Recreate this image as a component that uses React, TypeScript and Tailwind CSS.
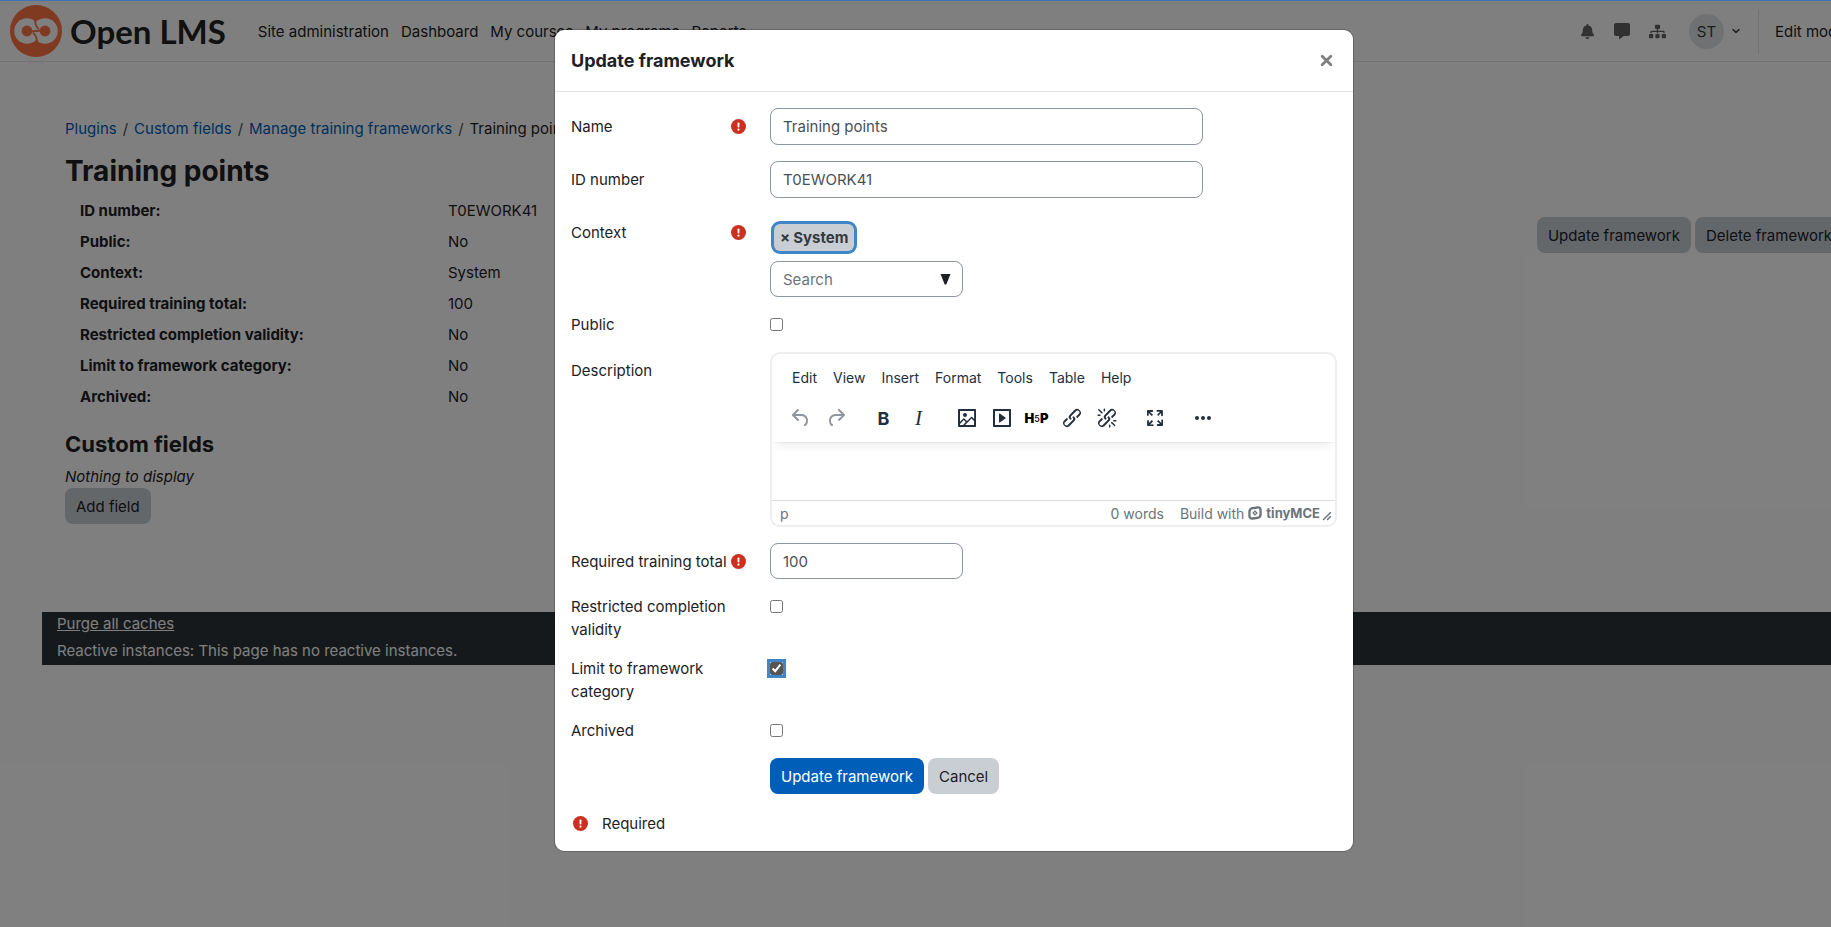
import type { ReactNode } from 'react';
import { FaBell, FaSitemap } from 'react-icons/fa';
import { FaMessage } from 'react-icons/fa6';
import { ChevronDown } from 'lucide-react';

const navLinks = ['Site administration', 'Dashboard', 'My courses', 'My programs', 'Reports'];
const crumbs = ['Plugins', 'Custom fields', 'Manage training frameworks'];

const details = [
    { label: 'ID number:', value: 'T0EWORK41' },
    { label: 'Public:', value: 'No' },
    { label: 'Context:', value: 'System' },
    { label: 'Required training total:', value: '100' },
    { label: 'Restricted completion validity:', value: 'No' },
    { label: 'Limit to framework category:', value: 'No' },
    { label: 'Archived:', value: 'No' },
];

const editorMenus = ['Edit', 'View', 'Insert', 'Format', 'Tools', 'Table', 'Help'];

const linkPath =
    'M6.2 12.3a1 1 0 0 1 1.4 1.4l-2 2a2 2 0 1 0 2.6 2.8l4.8-4.8a1 1 0 0 0 0-1.4 1 1 0 1 1 1.4-1.3 2.9 2.9 0 0 1 0 4L9.6 20a3.9 3.9 0 0 1-5.5-5.5l2-2Zm11.6-.6a1 1 0 0 1-1.4-1.4l2-2a2 2 0 1 0-2.6-2.8L11 10.3a1 1 0 0 0 0 1.4A1 1 0 1 1 9.6 13a2.9 2.9 0 0 1 0-4L14.4 4a3.9 3.9 0 0 1 5.5 5.5l-2 2Z';

const icons = {
    undo: 'M6.4 8H12c3.7 0 6.2 2 6.8 5.1.6 2.7-.4 5.6-2.3 6.8a1 1 0 0 1-1-1.8c1.1-.6 1.8-2.7 1.4-4.6-.5-2.1-2.1-3.5-4.9-3.5H6.4l3.3 3.3a1 1 0 1 1-1.4 1.4l-5-5a1 1 0 0 1 0-1.4l5-5a1 1 0 0 1 1.4 1.4L6.4 8Z',
    redo: 'M17.6 10H12c-2.8 0-4.4 1.4-4.9 3.5-.4 2 .3 4 1.4 4.6a1 1 0 1 1-1 1.8c-2-1.2-2.9-4.1-2.3-6.8.6-3 3-5.1 6.8-5.1h5.6l-3.3-3.3a1 1 0 1 1 1.4-1.4l5 5a1 1 0 0 1 0 1.4l-5 5a1 1 0 0 1-1.4-1.4l3.3-3.3Z',
    image: 'm5 15.7 3.3-3.2c.3-.3.7-.3 1 0L12 15l4.1-4c.3-.4.8-.4 1 0l2 1.9V5H5v10.7ZM5 18V19h3l2.8-2.9-2-2L5 17.9Zm14-3-2.5-2.4-6.4 6.5H19v-4ZM4 3h16c.6 0 1 .4 1 1v16c0 .6-.4 1-1 1H4a1 1 0 0 1-1-1V4c0-.6.4-1 1-1Zm6 8a2 2 0 1 0 0-4 2 2 0 0 0 0 4Z',
    media: 'M4 3h16c.6 0 1 .4 1 1v16c0 .6-.4 1-1 1H4a1 1 0 0 1-1-1V4c0-.6.4-1 1-1Zm1 2v14h14V5H5Zm4.8 2.6 5.6 4a.5.5 0 0 1 0 .8l-5.6 4A.5.5 0 0 1 9 16V8a.5.5 0 0 1 .8-.4Z',
    link: linkPath,
    unlink: linkPath +
        'M7.6 6.3a.8.8 0 0 1-1 1.1L3.3 4.2a.7.7 0 1 1 1-1l3.2 3.1ZM5.1 8.6a.8.8 0 0 1 0 1.5H3a.8.8 0 0 1 0-1.5H5Zm5-3.5a.8.8 0 0 1-1.5 0V3a.8.8 0 0 1 1.5 0V5Zm6 11.8a.8.8 0 0 1 1-1l3.2 3.2a.8.8 0 0 1-1 1L16 17Zm-2.2 2a.8.8 0 0 1 1.5 0V21a.8.8 0 0 1-1.5 0V19Zm5-3.5a.7.7 0 1 1 0-1.5H21a.8.8 0 0 1 0 1.5H19Z',
    fullscreen: 'm15.3 10-1.2-1.3 2.9-3h-2.3a.9.9 0 1 1 0-1.7H19c.5 0 .9.4.9.9v4.4a.9.9 0 1 1-1.8 0V7l-2.9 3Zm0 4 3 3v-2.3a.9.9 0 1 1 1.7 0V19c0 .5-.4.9-.9.9h-4.4a.9.9 0 1 1 0-1.8H17l-3-2.9 1.3-1.2ZM10 15.4l-2.9 3h2.3a.9.9 0 1 1 0 1.7H5a.9.9 0 0 1-.9-.9v-4.4a.9.9 0 1 1 1.8 0V17l2.9-3 1.2 1.3ZM8.7 10 5.7 7v2.3a.9.9 0 0 1-1.7 0V5c0-.5.4-.9.9-.9h4.4a.9.9 0 0 1 0 1.8H7l3 2.9-1.3 1.2Z',
    more: 'M6 10a2 2 0 0 0-2 2c0 1.1.9 2 2 2a2 2 0 0 0 2-2 2 2 0 0 0-2-2Zm12 0a2 2 0 0 0-2 2c0 1.1.9 2 2 2a2 2 0 0 0 2-2 2 2 0 0 0-2-2Zm-6 0a2 2 0 0 0-2 2c0 1.1.9 2 2 2a2 2 0 0 0 2-2 2 2 0 0 0-2-2Z',
};

const Icon = ({ name }: { name: keyof typeof icons }) => (
    <svg viewBox="0 0 24 24" className="w-6 h-6 fill-current">
        <path fillRule="evenodd" d={icons[name]} />
    </svg>
);

const toolbar: { label: string; icon: ReactNode; disabled?: boolean }[][] = [
    [
        { label: 'Undo', icon: <Icon name="undo" />, disabled: true },
        { label: 'Redo', icon: <Icon name="redo" />, disabled: true },
    ],
    [
        { label: 'Bold', icon: <span className="text-[18px] font-bold">B</span> },
        { label: 'Italic', icon: <span className="font-['Liberation_Serif',serif] text-[21px] italic">I</span> },
    ],
    [
        { label: 'Image', icon: <Icon name="image" /> },
        { label: 'Multimedia', icon: <Icon name="media" /> },
        {
            label: 'Configure H5P content',
            icon: (
                <span className="flex items-center text-[13px] font-black text-black">
                    H<span className="text-[9px] font-medium">5</span>P
                </span>
            ),
        },
        { label: 'Link', icon: <Icon name="link" /> },
        { label: 'Unlink', icon: <Icon name="unlink" /> },
    ],
    [{ label: 'Fullscreen', icon: <Icon name="fullscreen" /> }],
    [{ label: 'Reveal or hide additional toolbar items', icon: <Icon name="more" /> }],
];

const RequiredIcon = () => (
    <svg viewBox="0 0 16 16" className="w-[15px] h-[15px] shrink-0" role="img" aria-label="Required">
        <circle cx="8" cy="8" r="8" fill="#ca3120" />
        <rect x="7" y="3.6" width="2" height="5.4" rx="0.9" fill="#fff" />
        <circle cx="8" cy="11.3" r="1.2" fill="#fff" />
    </svg>
);

const Logo = () => (
    <svg viewBox="0 0 52 52" className="w-[52px] h-[52px] shrink-0">
        <circle cx="26" cy="26" r="26" fill="#fe7442" />
        <circle cx="17" cy="26" r="12.8" fill="#fff" />
        <circle cx="35" cy="26" r="12.8" fill="#fff" />
        <g fill="none" stroke="#fe7442" strokeWidth="1.8">
            <path d="M23 11C26 15 24 21 29 24" />
            <path d="M29 41C26 37 28 31 23 28" />
            <path d="M17 27L35 25" />
        </g>
        <circle cx="17" cy="26" r="5.4" fill="#fe7442" />
        <circle cx="35" cy="26" r="5.4" fill="#fe7442" />
    </svg>
);

const Button = ({ children, primary, type = 'button' }: { children: ReactNode; primary?: boolean; type?: 'button' | 'submit' }) => (
    <button
        type={type}
        className={`h-9 px-[11px] rounded-lg whitespace-nowrap ${primary ? 'bg-[#005eb8] text-white' : 'bg-[#c9ced5] text-[#1d2125]'}`}
    >
        {children}
    </button>
);

const Row = ({ id, label, required, tall, children }: { id: string; label: string; required?: boolean; tall?: boolean; children: ReactNode }) => (
    <div className="grid grid-cols-[199px_1fr] mb-4">
        <div className={`flex items-start justify-between pr-6 ${tall ? 'pt-[7px]' : ''}`}>
            <label htmlFor={id}>{label}</label>
            {required && <span className="flex h-[23px] items-center"><RequiredIcon /></span>}
        </div>
        <div>{children}</div>
    </div>
);

const inputClass = 'block px-3 border border-[#8f959e] rounded-lg bg-white text-[#495057] placeholder:text-[#6a737b]';

const CheckRow = ({ id, label, checked, focused }: { id: string; label: string; checked?: boolean; focused?: boolean }) => (
    <Row id={id} label={label}>
        <div className="flex h-[23px] items-center">
            <input
                id={id}
                type="checkbox"
                defaultChecked={checked}
                className={`w-[13px] h-[13px] accent-[#555555] ${focused ? 'ring-[3px] ring-[#3f86c9]' : ''}`}
            />
        </div>
    </Row>
);

const Editor = () => (
    <div className="h-[175px] flex flex-col border-2 border-[#eeeeee] rounded-[10px] overflow-hidden text-[14px] text-[#222f3e]">
        <div className="relative shadow-[0_2px_2px_-2px_rgba(34,47,62,0.15),0_8px_8px_-4px_rgba(34,47,62,0.08)]">
            <div className="flex h-[46px] items-center px-4">
                {editorMenus.map(menu => (
                    <button key={menu} type="button" className="px-1 mr-2">{menu}</button>
                ))}
            </div>
            <div className="flex h-[42px] items-start gap-[13px] pl-[11px]">
                {toolbar.map((group, i) => (
                    <div key={i} className="flex">
                        {group.map(item => (
                            <button
                                key={item.label}
                                type="button"
                                aria-label={item.label}
                                disabled={item.disabled}
                                className="flex w-[35px] h-9 items-center justify-center disabled:opacity-50"
                            >
                                {item.icon}
                            </button>
                        ))}
                    </div>
                ))}
            </div>
        </div>
        <textarea id="description" className="flex-1 w-full resize-none px-3 outline-none" />
        <div className="flex h-[25px] items-center border-t border-[#dddddd] pl-2 pr-[3px] text-[#6a737b]">
            <span>p</span>
            <span className="ml-auto mr-4">0 words</span>
            <a href="#tiny" className="flex items-center gap-1">
                Build with
                <svg viewBox="0 0 14 14" className="w-[14px] h-[14px]">
                    <path
                        fillRule="evenodd"
                        fill="currentColor"
                        d="M5 1 9.5.3A3.6 3.6 0 0 1 13.7 3.9V8.5A4.5 4.5 0 0 1 10 12.9L4.5 13.7A3.6 3.6 0 0 1 .3 10V5.5A4.5 4.5 0 0 1 5 1ZM5.4 3.2A2.6 2.6 0 0 0 2.6 5.9V9.6A1.7 1.7 0 0 0 4.7 11.3L8.8 10.7A2.6 2.6 0 0 0 11.4 8V4.4A1.7 1.7 0 0 0 9.3 2.7ZM7 4.2 9.8 7 7 9.8 4.2 7ZM7 6 6 7 7 8 8 7Z"
                    />
                </svg>
                <span className="text-[13px] font-bold">tinyMCE</span>
            </a>
            <svg viewBox="0 0 10 10" className="w-[10px] h-[10px] ml-0.5 self-end mb-1 fill-current">
                <path d="M8.1 1.1A.5.5 0 1 1 9 2l-7 7A.5.5 0 1 1 1 8l7-7ZM8.1 5.1A.5.5 0 1 1 9 6l-3 3A.5.5 0 1 1 5 8l3-3Z" />
            </svg>
        </div>
    </div>
);

const Header = () => (
    <header className="flex h-[62px] items-center border-b border-[#dee2e6] pl-[10px] pr-5 pt-px">
        <a href="#home" className="flex items-center gap-2">
            <Logo />
            <span className="font-['Lato',sans-serif] text-[33px] leading-[52px] font-bold whitespace-nowrap text-[#222222]">Open LMS</span>
        </a>
        <nav className="flex gap-3 ml-8 whitespace-nowrap">
            {navLinks.map(link => <a key={link} href="#nav">{link}</a>)}
        </nav>
        <div className="flex items-center ml-auto text-[#626262]">
            <button type="button" aria-label="Notifications" className="flex w-[35px] justify-center"><FaBell size={15} /></button>
            <button type="button" aria-label="Messages" className="flex w-[35px] justify-center"><FaMessage size={16} /></button>
            <button type="button" aria-label="Hierarchy" className="flex w-[35px] justify-center"><FaSitemap size={17} /></button>
            <button type="button" aria-label="User menu" className="flex items-center ml-3.5 text-[#343a40]">
                <span className="flex w-[35px] h-[35px] items-center justify-center rounded-full bg-[#dee2e6]">ST</span>
                <ChevronDown size={12} strokeWidth={3} className="ml-1.5" />
            </button>
        </div>
        <div className="flex h-[45px] items-center ml-4 pl-4 border-l border-[#dee2e6] whitespace-nowrap">
            <label htmlFor="editmode" className="mr-2.5">Edit mode</label>
            <input id="editmode" type="checkbox" role="switch" className="w-8 h-4 appearance-none rounded-full border border-[#8f959e]" />
        </div>
    </header>
);

const UpdateFrameworkModal = () => (
    <div className="absolute inset-0 flex items-start justify-center bg-black/50 pt-[29px]">
        <div role="dialog" aria-labelledby="modal-title" className="w-[800px] rounded-[10px] border border-black/20 bg-white bg-clip-padding">
            <div className="flex h-[62px] items-center justify-between border-b border-[#dee2e6] px-4">
                <h5 id="modal-title" className="text-[18px] font-bold">Update framework</h5>
                <button type="button" aria-label="Close" className="p-1 text-[#7f7f7f]">
                    <svg viewBox="0 0 12 12" className="w-[13px] h-[13px]" fill="none" stroke="currentColor" strokeWidth="2.6" strokeLinecap="round">
                        <path d="M2 2L10 10M10 2L2 10" />
                    </svg>
                </button>
            </div>
            <form className="p-4" onSubmit={e => e.preventDefault()}>
                <Row id="name" label="Name" required tall>
                    <input id="name" type="text" defaultValue="Training points" className={`${inputClass} h-[37px] w-[433px]`} />
                </Row>
                <Row id="idnumber" label="ID number" tall>
                    <input id="idnumber" type="text" defaultValue="T0EWORK41" className={`${inputClass} h-[37px] w-[433px]`} />
                </Row>
                <Row id="context" label="Context" required tall>
                    <button type="button" className="flex h-[27px] items-center gap-[3px] my-[10px] ml-1 px-1.5 rounded-md bg-[#c9ced5] font-bold text-[#343a40] ring-[3px] ring-[#3f86c9]">
                        <span>×</span>System
                    </button>
                    <div className="relative w-[193px]">
                        <input id="context" type="text" placeholder="Search" className={`${inputClass} h-9 w-full`} />
                        <svg viewBox="0 0 10 11" className="absolute right-3 top-[13px] w-[11px] h-[11px]">
                            <path d="M0 0H10L5.8 10.5H4.2Z" fill="#1d2125" />
                        </svg>
                    </div>
                </Row>
                <CheckRow id="public" label="Public" />
                <Row id="description" label="Description" tall>
                    <Editor />
                </Row>
                <Row id="total" label="Required training total" required tall>
                    <input id="total" type="text" defaultValue="100" className={`${inputClass} h-9 w-[193px]`} />
                </Row>
                <CheckRow id="restricted" label="Restricted completion validity" />
                <CheckRow id="limit" label="Limit to framework category" checked focused />
                <CheckRow id="archived" label="Archived" />
                <div className="flex gap-1 mb-[18px] pl-[199px]">
                    <Button primary type="submit">Update framework</Button>
                    <Button>Cancel</Button>
                </div>
                <div className="flex items-center gap-3.5 pl-0.5">
                    <RequiredIcon />
                    Required
                </div>
            </form>
        </div>
    </div>
);

export default function App() {
    return (
        <div className="overflow-hidden">
            {/* The page runs a little past the right edge of the window */}
            <div className="relative w-[calc(100%+77px)] min-h-screen bg-white font-['Inter',sans-serif] text-[15px] leading-[23px] text-[#1d2125]">
                <Header />
                <main className="px-[65px] pt-[55px]">
                    <nav aria-label="Breadcrumb">
                        <ol className="flex whitespace-nowrap">
                            {crumbs.map(crumb => (
                                <li key={crumb}>
                                    <a href="#crumb" className="text-[#005eb8]">{crumb}</a>
                                    <span className="px-1.5 text-[#495057]">/</span>
                                </li>
                            ))}
                            <li>Training points</li>
                        </ol>
                    </nav>
                    <h2 className="mt-3.5 text-[28px] leading-[34px] font-bold">Training points</h2>
                    <div className="flex items-start justify-between mt-[7px]">
                        <dl className="pl-[15px]">
                            {details.map(row => (
                                <div key={row.label} className="grid grid-cols-[368px_auto] py-1">
                                    <dt className="font-bold">{row.label}</dt>
                                    <dd>{row.value}</dd>
                                </div>
                            ))}
                        </dl>
                        <div className="flex gap-1 mt-[22px]">
                            <Button>Update framework</Button>
                            <Button>Delete framework</Button>
                        </div>
                    </div>
                    <h3 className="mt-[18px] text-[22px] leading-[28px] font-bold">Custom fields</h3>
                    <p className="mt-[7px] italic">Nothing to display</p>
                    <Button>Add field</Button>
                </main>
                <footer className="mx-[42px] mt-[88px] px-[15px] pb-[3px] bg-[#2b3338] text-white">
                    <a href="#purge" className="underline">Purge all caches</a>
                    <div className="mt-1">Reactive instances: This page has no reactive instances.</div>
                </footer>
                <UpdateFrameworkModal />
                <div className="absolute inset-x-0 top-0 h-px bg-[#3f73b8]" />
            </div>
        </div>
    );
}
